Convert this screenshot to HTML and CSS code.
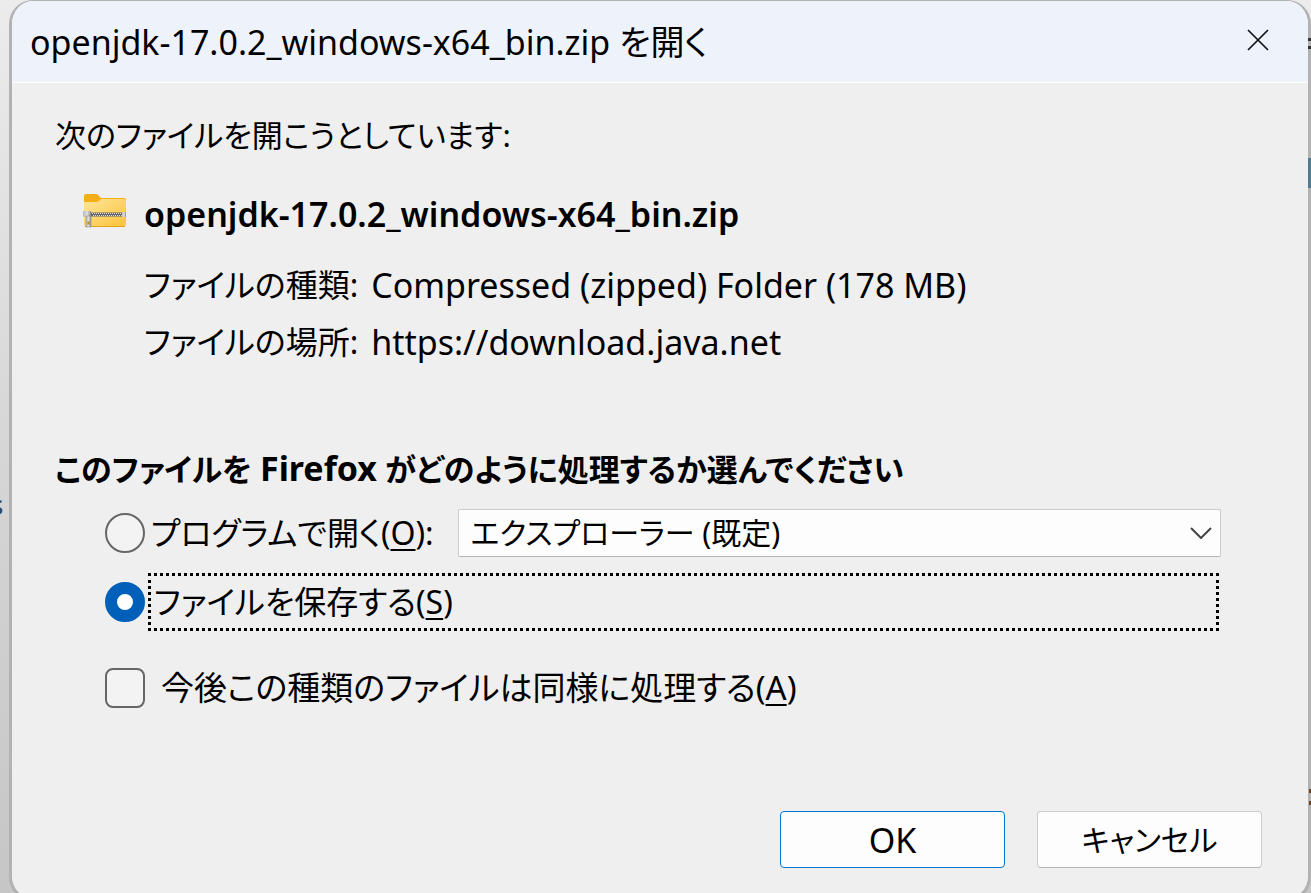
FILE: index.html
```html
<!DOCTYPE html>
<html lang="ja">
<head>
    <meta charset="UTF-8">
    <meta name="viewport" content="width=device-width, initial-scale=1.0">
    <title>openjdk-17.0.2_windows-x64_bin.zip を開く</title>
    <link rel="stylesheet" href="styles.css">
</head>
<body>
    <!-- Page behind the dialog -->
    <span class="behind behind-text" aria-hidden="true">s</span>
    <span class="behind behind-menu"></span>
    <span class="behind behind-banner"></span>
    <span class="behind behind-mark"></span>

    <main class="dialog">
        <header class="titlebar">
            <h1>openjdk-17.0.2_windows-x64_bin.zip を開く</h1>
            <button type="button" class="close" aria-label="閉じる">
                <svg width="22" height="22" viewBox="0 0 22 22" fill="none" stroke="#111" stroke-width="1.7">
                    <path d="M1 1l20 20M21 1L1 21"/>
                </svg>
            </button>
        </header>

        <form class="content">
            <p class="intro">次のファイルを開こうとしています:</p>

            <section class="file">
                <svg class="file-icon" width="44" height="36" viewBox="0 0 44 36">
                    <defs>
                        <linearGradient id="folder" x1="0" y1="0" x2="1" y2="1">
                            <stop offset="0" stop-color="#ffe59b"/>
                            <stop offset="1" stop-color="#fbc43a"/>
                        </linearGradient>
                        <linearGradient id="metal" x1="0" y1="0" x2="1" y2="0">
                            <stop offset="0" stop-color="#b5b5b5"/>
                            <stop offset=".5" stop-color="#e2e2e2"/>
                            <stop offset="1" stop-color="#888"/>
                        </linearGradient>
                    </defs>
                    <path d="M1 12V3q0-2 2-2h10q2 0 3 2l2 2h23q2 0 2 2v5z" fill="#f5ae17"/>
                    <path d="M1 9h12q2 0 3-1l2-2h23q2 0 2 2v23q0 2-2 2H3q-2 0-2-2z" fill="url(#folder)"/>
                    <path d="M2 33.500h40" stroke="#e3a11d"/>
                    <path d="M7 21.500h34" stroke="#666" stroke-width="4"/>
                    <path d="M9 20.500h30M10 22.500h30" stroke="#ddd" stroke-width="1" stroke-dasharray="1 1"/>
                    <rect x="39" y="19" width="4" height="5" fill="url(#metal)"/>
                    <rect x="0" y="18" width="8" height="6" rx="1" fill="url(#metal)"/>
                    <path d="M3 23h5v11H3z" fill="url(#metal)" stroke="#8a8a8a" stroke-width=".6"/>
                    <rect x="4.500" y="28.500" width="2" height="3" fill="#b9852a"/>
                </svg>
                <div class="file-info">
                    <h2>openjdk-17.0.2_windows-x64_bin.zip</h2>
                    <dl>
                        <dt>ファイルの種類:</dt>
                        <dd>Compressed (zipped) Folder (178 MB)</dd>
                        <dt>ファイルの場所:</dt>
                        <dd>https://download.java.net</dd>
                    </dl>
                </div>
            </section>

            <fieldset>
                <legend>このファイルを <span class="latin">Firefox</span> がどのように処理するか選んでください</legend>
                <div class="option">
                    <input type="radio" name="action" id="open">
                    <label for="open">プログラムで開く(<u>O</u>):</label>
                    <select aria-label="プログラム">
                        <option>エクスプローラー (既定)</option>
                    </select>
                </div>
                <div class="option">
                    <input type="radio" name="action" id="save" checked>
                    <label for="save" class="focused">ファイルを保存する(<u>S</u>)</label>
                </div>
                <div class="option remember">
                    <input type="checkbox" id="remember">
                    <label for="remember">今後この種類のファイルは同様に処理する(<u>A</u>)</label>
                </div>
            </fieldset>

            <footer class="buttons">
                <button type="submit" class="primary">OK</button>
                <button type="button" class="cancel">キャンセル</button>
            </footer>
        </form>
    </main>
</body>
</html>
```

FILE: styles.css
```css
* {
    box-sizing: border-box;
}

body {
    position: relative;
    height: 100vh;
    margin: 0;
    padding-left: 9px;
    overflow: hidden;
    background: linear-gradient(#ececec, #d6d6d6 50%, #c6c6c6);
    color: #000;
    font-family: "Noto Sans", "Noto Sans CJK JP", sans-serif;
    font-size: 34px;
    line-height: 48px;
    font-feature-settings: "palt";
}

h1, h2, p, dl, dd, fieldset, legend {
    margin: 0;
    padding: 0;
    border: 0;
}

button, select {
    font: inherit;
    font-feature-settings: inherit;
    color: inherit;
}

.dialog {
    display: flex;
    flex-direction: column;
    min-height: calc(100vh + 8px);
    border: 3px solid #b2b2b2;
    border-top-width: 1px;
    border-radius: 24px;
    background: #efefef;
    overflow: hidden;
}

.titlebar {
    display: flex;
    align-items: center;
    justify-content: space-between;
    height: 82px;
    padding: 0 32px 0 18px;
    border-bottom: 1px solid #fff;
    background: #eef3fb;
}

.titlebar h1 {
    font-size: 34px;
    font-weight: 400;
}

.close {
    display: flex;
    margin-bottom: 4px;
    padding: 7px;
    border: 0;
    background: none;
}

.content {
    display: flex;
    flex: 1;
    flex-direction: column;
    padding: 28px 43px 30px;
}

.intro, legend {
    font-size: 31px;
}

.file {
    display: flex;
    gap: 17px;
    margin: 31px 0 0 28px;
}

.file-icon {
    margin-top: 3px;
}

.file h2 {
    font-size: 34px;
    font-weight: 600;
}

.file dl {
    display: grid;
    grid-template-columns: max-content 1fr;
    gap: 9px 13px;
    margin-top: 23px;
}

dt {
    font-size: 32px;
}

fieldset {
    min-width: 0;
    margin-top: 78px;
}

legend {
    font-weight: 700;
}

legend .latin {
    font-size: 34px;
}

.option {
    display: flex;
    align-items: center;
    gap: 3px;
    margin: 16px 44px 0 50px;
    font-size: 32px;
}

input {
    flex: none;
    width: 40px;
    height: 40px;
    margin: 0;
    appearance: none;
    border: 2px solid #666;
    background: #f3f3f3;
}

input[type="radio"] {
    border-radius: 50%;
}

input[type="radio"]:checked {
    border: 12px solid #005fb8;
    background: #fff;
}

input[type="checkbox"] {
    border-radius: 8px;
}

.option label {
    padding: 0 3px;
}

.option label.focused {
    flex: 1;
    margin-right: 2px;
    padding: 2px 3px;
    border: 3px dotted #000;
}

u {
    text-decoration-thickness: 2px;
    text-underline-offset: 4px;
}

select {
    flex: 1;
    height: 48px;
    margin-left: 18px;
    padding: 0 12px;
    appearance: none;
    border: 1px solid #ccc;
    border-bottom-color: #b5b5b5;
    border-radius: 2px;
    background: #fdfdfd url("data:image/svg+xml,%3Csvg xmlns='http://www.w3.org/2000/svg' width='22' height='12' fill='none' stroke='%23444' stroke-width='2'%3E%3Cpath d='M1 1l10 10L21 1'/%3E%3C/svg%3E") no-repeat right 8px center;
    font-size: 30px;
    line-height: 46px;
}

.remember {
    gap: 13px;
    margin-top: 33px;
    font-size: 33px;
}

.buttons {
    display: flex;
    justify-content: flex-end;
    gap: 32px;
    margin-top: auto;
    padding-right: 3px;
}

.buttons button {
    width: 225px;
    height: 57px;
    padding: 0;
    border: 1px solid #ccc;
    border-bottom-color: #b5b5b5;
    border-radius: 4px;
    background: #fdfdfd;
}

.buttons .primary {
    border-color: #0078d4;
}

.buttons .cancel {
    font-size: 30px;
}

.behind {
    position: absolute;
    right: 0;
    width: 3px;
    z-index: 1;
}

.behind-text {
    left: -10px;
    top: 480px;
    width: 16px;
    color: #345;
    font-size: 28px;
}

.behind-menu {
    top: 38px;
    height: 11px;
    border: solid #333;
    border-width: 3px 0;
}

.behind-banner {
    top: 158px;
    height: 30px;
    background: #527a91;
}

.behind-mark {
    width: 2px;
    top: 789px;
    height: 16px;
    border: solid #654321;
    border-width: 4px 0;
}
```
